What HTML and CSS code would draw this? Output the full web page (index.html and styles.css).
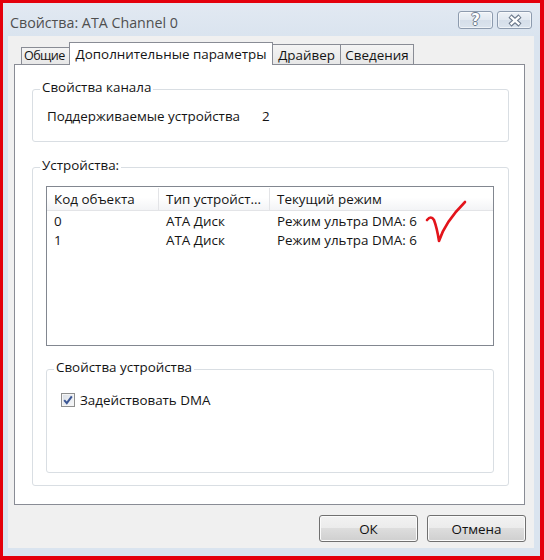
FILE: index.html
```html
<!DOCTYPE html>
<html lang="ru">
<head>
<meta charset="utf-8">
<title>Свойства: ATA Channel 0</title>
<link rel="stylesheet" href="styles.css">
</head>
<body>
<div class="frame">
	<div class="titlebar">
		<span class="caption">Свойства: ATA Channel 0</span>
		<div class="caption-btns">
			<span class="cbtn help">?</span>
			<span class="cbtn close">
				<svg width="16" height="13" viewBox="0 0 16 13">
					<path d="M3 2 L13 11 M13 2 L3 11" stroke="#6d7a8c" stroke-width="4.6" fill="none"/>
					<path d="M3.6 2.6 L12.4 10.4 M12.4 2.6 L3.6 10.4" stroke="#fff" stroke-width="2.2" fill="none"/>
				</svg>
			</span>
		</div>
	</div>
	<div class="client">
		<div class="tabs">
			<div class="tab first">Общие</div>
			<div class="tab active">Дополнительные параметры</div>
			<div class="tab driver">Драйвер</div>
			<div class="tab info">Сведения</div>
		</div>
		<div class="panel">
			<div class="group channel">
				<div class="group-title">Свойства канала</div>
				<div class="prop-row"><span class="prop-name">Поддерживаемые устройства</span><span>2</span></div>
			</div>
			<div class="group devices">
				<div class="group-title">Устройства:</div>
				<div class="list">
					<div class="list-head">
						<div class="col c1">Код объекта</div>
						<div class="col c2">Тип устройст...</div>
						<div class="col c3">Текущий режим</div>
					</div>
					<div class="list-row first-row">
						<div class="cell c1">0</div>
						<div class="cell c2">ATA Диск</div>
						<div class="cell c3">Режим ультра DMA: 6</div>
					</div>
					<div class="list-row">
						<div class="cell c1">1</div>
						<div class="cell c2">ATA Диск</div>
						<div class="cell c3">Режим ультра DMA: 6</div>
					</div>
					<!-- пометка от руки поверх списка -->
					<svg class="mark" width="50" height="50" viewBox="0 0 50 50">
						<path d="M7 25 Q11 20 14 25 Q17 33 19 46 Q25 27 45 7" stroke="#e3141b" stroke-width="2.6" fill="none" stroke-linecap="round" stroke-linejoin="round"/>
					</svg>
				</div>
				<div class="group device">
					<div class="group-title">Свойства устройства</div>
					<label class="check">
						<span class="box">
							<svg width="12" height="12" viewBox="0 0 12 12">
								<path d="M2.2 6.2 L4.8 9.2 L9.8 2.4" stroke="#3b5694" stroke-width="2" fill="none"/>
							</svg>
						</span>
						Задействовать DMA
					</label>
				</div>
			</div>
		</div>
		<div class="buttons">
			<button class="btn">ОК</button>
			<button class="btn">Отмена</button>
		</div>
	</div>
</div>
</body>
</html>
```
FILE: styles.css
```css
body{margin:0;font-family:"Open Sans",sans-serif;font-size:13.4px;color:#141414;}
.frame{width:544px;height:560px;box-sizing:border-box;border:solid #e4000c;border-width:3px 4px 4px 3px;background:#dae4ef;}

/* заголовок окна */
.titlebar{height:33px;box-sizing:border-box;display:flex;justify-content:space-between;align-items:flex-start;padding:0 8px 0 7px;background:linear-gradient(#e2e9f2,#dae4ef);}
.caption{margin-top:10px;font-size:14.25px;line-height:20px;color:#4f4f4f;}
.caption-btns{display:flex;gap:4px;margin-top:8px;}
.cbtn{width:35px;height:18px;box-sizing:border-box;border:1px solid #8d9bae;border-radius:3px;display:flex;align-items:center;justify-content:center;background:linear-gradient(#eef2f7,#e1e8f0 50%,#d5dee9 50%,#dbe4ee);box-shadow:inset 0 0 0 1px rgba(255,255,255,.55);}
.help{font:bold 15px "DejaVu Sans",sans-serif;line-height:16px;color:#fff;text-shadow:1px 0 #6d7a8c,-1px 0 #6d7a8c,0 1px #6d7a8c,0 -1px #6d7a8c;}

/* клиентская часть */
.client{height:512px;box-sizing:border-box;margin:0 6px 0 5px;padding-top:6px;background:#f0f0f0;}
.tabs{display:flex;align-items:flex-end;height:22px;margin-left:13px;}
.tab{box-sizing:border-box;display:flex;align-items:center;justify-content:center;height:20px;line-height:16px;white-space:nowrap;border:1px solid #898c95;border-bottom:none;background:linear-gradient(#f4f4f4,#e7e7e7);}
.tab.first{width:50px;height:17px;justify-content:flex-start;padding-left:2px;font-size:12.6px;letter-spacing:-0.6px;}
.tab.active{position:relative;z-index:1;width:204px;height:23px;margin:0 0 -1px -2px;padding-bottom:1px;background:#fff;}
.tab.driver{width:69px;margin-left:-1px;}
.tab.info{width:74px;margin-left:-1px;}
.panel{width:511px;height:441px;box-sizing:border-box;margin-left:6px;padding:24px 15px 0 17px;border:1px solid #898c95;background:#fff;}

/* рамки групп */
.group{border:1px solid #d9dee3;border-radius:3px;}
.group-title{width:fit-content;margin:-12px 0 0 7px;padding:0 2px;line-height:18px;background:#fff;}
.channel{padding-bottom:16px;}
.prop-row{display:flex;margin:11px 0 0 14px;line-height:18px;}
.prop-name{width:215px;}
.devices{margin-top:25px;padding-bottom:12px;}
.device{margin:23px 14px 0 13px;padding-bottom:63px;}
.check{display:flex;align-items:center;gap:5px;margin:15px 0 0 14px;line-height:18px;}
.box{width:14px;height:14px;box-sizing:border-box;border:1px solid #8e8f8f;display:flex;align-items:center;justify-content:center;background:linear-gradient(135deg,#d9dee5,#f7f8fa);box-shadow:inset 0 0 0 1px #f4f4f4;}

/* список устройств */
.list{position:relative;height:160px;box-sizing:border-box;margin:12px 14px 0 13px;border:1px solid #828790;background:#fff;}
.list-head{display:flex;height:24px;box-sizing:border-box;padding-top:1px;border-bottom:1px solid #e3e4e7;background:linear-gradient(#fff 45%,#f3f4f6);}
.col{box-sizing:border-box;padding-left:7px;line-height:22px;white-space:nowrap;overflow:hidden;border-right:1px solid #e3e4e7;}
.list-row{display:flex;line-height:19px;}
.first-row{margin-top:1px;}
.cell{box-sizing:border-box;padding-left:7px;white-space:nowrap;}
.c1{width:112px;}
.c2{width:111px;}
.c3{flex:1;border-right:none;}
.mark{position:absolute;left:373px;top:8px;}

/* кнопки */
.buttons{display:flex;justify-content:flex-end;gap:9px;margin:10px 8px 0 0;}
.btn{width:99px;height:27px;padding:0;font:inherit;color:#111;border:1px solid #707070;border-radius:3px;background:linear-gradient(#f2f2f2,#ebebeb 50%,#dddddd 50%,#cfcfcf);box-shadow:inset 0 0 0 1px #fbfbfb;}
```
